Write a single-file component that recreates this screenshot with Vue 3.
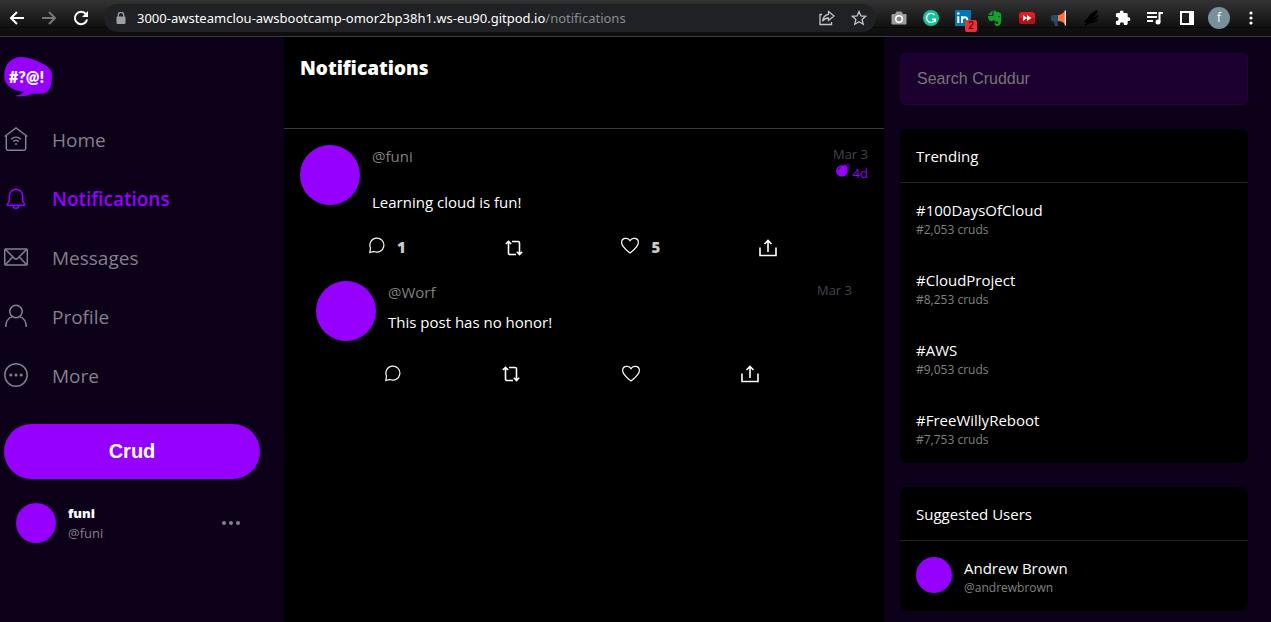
<script setup>
import { ref } from 'vue'

const search = ref('')

const navItems = [
  { name: 'Home', icon: 'home' },
  { name: 'Notifications', icon: 'bell', active: true },
  { name: 'Messages', icon: 'mail' },
  { name: 'Profile', icon: 'user' },
  { name: 'More', icon: 'more' },
]

const activities = [
  { handle: '@funi', date: 'Mar 3', expires: '4d', message: 'Learning cloud is fun!', replies: 1, likes: 5 },
  { handle: '@Worf', date: 'Mar 3', message: 'This post has no honor!', reply: true },
]

const trends = [
  { tag: '#100DaysOfCloud', count: '#2,053 cruds' },
  { tag: '#CloudProject', count: '#8,253 cruds' },
  { tag: '#AWS', count: '#9,053 cruds' },
  { tag: '#FreeWillyReboot', count: '#7,753 cruds' },
]
</script>

<template>
  <div class="window">
    <header class="toolbar">
      <div class="history">
        <button type="button" aria-label="Back">
          <svg width="16" height="16" viewBox="0 0 16 16" class="line"><path d="M15 8H2M8 2 2 8l6 6" /></svg>
        </button>
        <button type="button" aria-label="Forward" class="dim">
          <svg width="16" height="16" viewBox="0 0 16 16" class="line"><path d="M1 8h13M8 2l6 6-6 6" /></svg>
        </button>
        <button type="button" aria-label="Reload">
          <svg width="16" height="16" viewBox="0 0 16 16" class="line"><path d="M13 4.2A6.2 6.2 0 1 0 14.1 9.5" /><path d="M15 1v6H9z" fill="currentColor" stroke="none" /></svg>
        </button>
      </div>

      <div class="address">
        <svg class="lock" width="10" height="12" viewBox="0 0 10 12"><path d="M2.3 5V3a2.7 2.7 0 0 1 5.4 0v2" fill="none" stroke="#9aa0a6" stroke-width="1.3" /><rect x="0.5" y="4.5" width="9" height="7.5" rx="1" fill="#9aa0a6" /></svg>
        <p class="url">3000-awsteamclou-awsbootcamp-omor2bp38h1.ws-eu90.gitpod.io<span>/notifications</span></p>
        <button type="button" aria-label="Share page">
          <svg width="16" height="16" viewBox="0 0 16 16" class="thin"><path d="M3 4.5H1v10h11.500V12M9.500 1.500l5.500 4.500-5.500 4.500V8C6.500 8 5 9 3.500 11.200 4 7.500 6 4.800 9.500 4.300z" /></svg>
        </button>
        <button type="button" aria-label="Bookmark">
          <svg width="16" height="16" viewBox="0 0 16 16" class="thin"><path d="m8 1.5 1.9 4.400 4.800.4-3.600 3.200 1.100 4.700L8 11.700l-4.200 2.500 1.100-4.700L1.300 6.300l4.800-.4z" /></svg>
        </button>
      </div>

      <div class="extensions">
        <button type="button" aria-label="Screenshot">
          <svg width="16" height="16" viewBox="0 0 16 16"><path d="M1.500 4H4l1.500-2.500h5L12 4h2.500A1 1 0 0 1 15.500 5v8.500a1 1 0 0 1-1 1h-13a1 1 0 0 1-1-1V5a1 1 0 0 1 1-1z" fill="#9b9b9b" /><circle cx="8" cy="9" r="4" fill="#fff" /><circle cx="8" cy="9" r="2.5" fill="#888" /></svg>
        </button>
        <button type="button" aria-label="Grammarly">
          <svg width="16" height="16" viewBox="0 0 16 16"><circle cx="8" cy="8" r="8" fill="#15c39a" /><path d="M11.500 5A4.500 4.500 0 1 0 12.300 9.300H9M12.300 9.300v2.700" fill="none" stroke="#fff" stroke-width="1.4" /></svg>
        </button>
        <button type="button" aria-label="LinkedIn" class="badged">
          <svg width="16" height="16" viewBox="0 0 16 16"><rect width="16" height="16" fill="#0077b5" /><path d="M3.300 6.200V13M7 13V6.200M7.200 9.500c0-3 5-3.300 5 0V13" fill="none" stroke="#fff" stroke-width="2" /><circle cx="3.3" cy="3.5" r="1.3" fill="#fff" /></svg>
          <span class="badge">2</span>
        </button>
        <button type="button" aria-label="Evernote">
          <svg width="16" height="16" viewBox="0 0 16 16"><path d="M5.500.6 1 5h3.500a1 1 0 0 0 1-1zM6.500.5V5a1 1 0 0 1-1 1H1c0 3 1 5 3 5 1.500 0 2.500-.5 3-1.500.2 1.500 1 2 2.500 2 1.300 0 1.700.5 1.700 1.300 0 1-.7 1.200-1.500 1.200s-1-.8-.3-1.300C7.500 12 6.500 15.500 9.500 15.900c3 .3 4.300-1.200 4.700-5 .3-3 .3-6-.5-8-1-1-3-1-4-1C9 .8 8 .3 6.500.5z" fill="#12a32f" /><path d="M11 7c.2-1.200 1.500-1.200 1.700.2z" fill="#111" /></svg>
        </button>
        <button type="button" aria-label="Video downloader">
          <svg width="16" height="16" viewBox="0 0 16 16"><rect y="2" width="16" height="12" rx="3" fill="#e01b22" /><path d="M0 8h16v3a3 3 0 0 1-3 3H3a3 3 0 0 1-3-3z" fill="#b90e15" /><path d="m4 5 4 3-4 3zm4 0 4.500 3L8 11z" fill="#fff" /></svg>
        </button>
        <button type="button" aria-label="Announcements">
          <svg width="16" height="16" viewBox="0 0 16 16"><path d="M2 5h6v6.500H2A2 2 0 0 1 0 9.500V7a2 2 0 0 1 2-2zM3 11h3l1 5H4z" fill="#2d4a68" /><path d="M7 5c3 0 5-2 7-4v13c-2-2-4-3-7-3z" fill="#ff7043" /><path d="M13.700.5H15v15h-1.300z" fill="#e8e8e8" /></svg>
        </button>
        <button type="button" aria-label="Signature">
          <svg width="16" height="16" viewBox="0 0 16 16"><path d="M1 11c1.500-1 2-.5 3-2 2-4 5-7 9-8.500 2-.5 2.500.5 1.500 2L9 9l5.500-4c1.500 0 1.500 1.500.5 2l-5 4 4-1.500c1.500 0 1.500 1 .5 1.500-3 2-6 2.500-9 2.500L2.500 16l-1-1 2-2.500c-1 0-2.500 0-2.500-1.500z" fill="#000" /></svg>
        </button>
        <button type="button" aria-label="Extensions">
          <svg width="16" height="16" viewBox="0 0 16 16"><path d="M13.500 7.300h-.8V4.500a1.400 1.400 0 0 0-1.400-1.400H8.600v-.8a1.900 1.900 0 0 0-3.800 0v.8H2.200A1.400 1.400 0 0 0 .9 4.500v2.600h.7a2 2 0 0 1 0 4H.9v2.500A1.400 1.400 0 0 0 2.200 15h2.700v-.8a2 2 0 0 1 4 0v.8h2.400a1.400 1.400 0 0 0 1.400-1.400v-2.500h.8a1.900 1.900 0 0 0 0-3.800z" fill="#fff" /></svg>
        </button>
        <button type="button" aria-label="Media controls">
          <svg width="16" height="16" viewBox="0 0 16 16" class="line"><path d="M0 3h10M0 7h10M0 11h6M12.500 12V3H16" /><circle cx="11" cy="12" r="2.5" fill="#fff" stroke="none" /></svg>
        </button>
        <button type="button" aria-label="Side panel">
          <svg width="16" height="16" viewBox="0 0 16 16"><path d="M1 1h14v14H1zm2 2v10h7V3z" fill="#fff" fill-rule="evenodd" /></svg>
        </button>
        <button type="button" class="account" aria-label="Account">f</button>
        <button type="button" aria-label="Menu">
          <svg width="16" height="16" viewBox="0 0 16 16" fill="#fff"><circle cx="8" cy="3" r="1.6" /><circle cx="8" cy="8" r="1.6" /><circle cx="8" cy="13" r="1.6" /></svg>
        </button>
      </div>
    </header>

    <div class="page">
      <nav class="sidebar">
        <svg class="logo" width="48" height="40" viewBox="0 0 48 40" role="img" aria-label="Cruddur">
          <path d="M17 0c7 0 15 3 22 7 6 3 9 6 9 12-.2 6-1 12-4 15-3 3-8 3-15 2.500-4 2-11 3.700-18 2.500 4-.7 7-2 9-4C12 34 4 31 1 24-1 17 1 9 5 5c3-3 7-5 12-5z" fill="#9500ff" />
          <text x="5" y="26" class="logo-text">#?@!</text>
        </svg>

        <a v-for="item in navItems" :key="item.name" href="#" class="nav-item" :class="{ active: item.active }">
          <svg width="24" height="24" viewBox="0 0 24 24" class="nav-icon">
            <template v-if="item.icon === 'home'">
              <path d="M.7 9.500 12 1l11.300 8.500M2.300 8.500v13a1.700 1.700 0 0 0 1.700 1.700h16a1.700 1.700 0 0 0 1.700-1.700v-13" />
              <path d="M7.200 12.300c2.800-2.600 6.800-2.600 9.600 0M9.300 14.600c1.600-1.500 3.800-1.500 5.400 0" />
              <circle cx="12" cy="17" r="1" class="solid" />
            </template>
            <template v-else-if="item.icon === 'bell'">
              <path d="M3.400 19.300v-1.200l1.900-3V10a6.700 6.700 0 0 1 13.400 0v5.100l1.900 3v1.200zM9.200 19.500c0 3.800 5.600 3.800 5.600 0" />
            </template>
            <template v-else-if="item.icon === 'mail'">
              <rect x=".7" y="4" width="22.600" height="16" rx="1" />
              <path d="m1.500 4.500 8.200 8.200c1.500 1.700 3.100 1.700 4.600 0l8.200-8.200M1.500 19.500 8.700 12M22.500 19.500 15.300 12" />
            </template>
            <template v-else-if="item.icon === 'user'">
              <circle cx="12" cy="7.5" r="6.2" />
              <path d="M1.700 23c0-5.300 2.600-9 6.800-10.600M22.300 23c0-5.300-2.600-9-6.800-10.600" />
            </template>
            <template v-else>
              <circle cx="12" cy="12" r="11.2" />
              <g class="solid"><circle cx="6.8" cy="12" r="1.5" /><circle cx="12" cy="12" r="1.5" /><circle cx="17.2" cy="12" r="1.5" /></g>
            </template>
          </svg>
          <span>{{ item.name }}</span>
        </a>

        <button type="button" class="crud">Crud</button>

        <div class="profile">
          <div class="avatar small"></div>
          <div class="who">
            <strong>funi</strong>
            <span>@funi</span>
          </div>
          <button type="button" aria-label="Account options" class="options">
            <svg width="20" height="6" viewBox="0 0 20 6" fill="currentColor"><circle cx="3" cy="3" r="2" /><circle cx="10" cy="3" r="2" /><circle cx="17" cy="3" r="2" /></svg>
          </button>
        </div>
      </nav>

      <main class="feed">
        <header class="feed-head"><h1>Notifications</h1></header>

        <article v-for="a in activities" :key="a.handle" class="activity" :class="{ reply: a.reply }">
          <div class="avatar large"></div>
          <div class="body">
            <div class="meta">
              <a href="#" class="handle">{{ a.handle }}</a>
              <div class="times">
                <span class="date">{{ a.date }}</span>
                <span v-if="a.expires" class="expires">
                  <svg width="14" height="14" viewBox="0 0 14 14" fill="currentColor"><circle cx="5.8" cy="7" r="5.8" /><path d="m7.500 1.200 1.200-1L12 3.500l-1 1.300z" /><path d="M10.500 2c.8-1.700 1.800-1.500 3-1M12 3h1.800" fill="none" stroke="currentColor" /><path d="M2.200 6c.3-1.400 1-2.200 2.200-2.600" fill="none" stroke="#000" stroke-width=".8" /></svg>
                  {{ a.expires }}
                </span>
              </div>
            </div>
            <p class="message">{{ a.message }}</p>
            <div class="actions">
              <button type="button" aria-label="Reply">
                <svg width="16" height="18" viewBox="0 0 16 18" class="outline"><path d="M.8 15.500 1.500 11A7 7 0 1 1 5 14.500z" /></svg>
                <span v-if="a.replies" class="count">{{ a.replies }}</span>
              </button>
              <button type="button" aria-label="Repost">
                <svg width="18" height="18" viewBox="0 0 18 18" class="outline heavy"><path d="M.8 5 3.500 2.300 6.200 5M3.500 2.500V14a1.500 1.500 0 0 0 1.500 1.500h6M17.200 12.800l-2.700 2.700-2.700-2.700M14.500 15.300V4A1.500 1.500 0 0 0 13 2.500H7" /></svg>
              </button>
              <button type="button" aria-label="Like">
                <svg width="18" height="18" viewBox="0 0 18 18" class="outline"><path d="M9 16C6 13.500.6 9.800.6 5.500.6 1 6.800-.2 9 3.600c2.200-3.800 8.400-2.600 8.400 1.900C17.400 9.800 12 13.500 9 16z" /></svg>
                <span v-if="a.likes" class="count">{{ a.likes }}</span>
              </button>
              <button type="button" aria-label="Share">
                <svg width="18" height="18" viewBox="0 0 18 18" class="outline heavy"><path d="M1 8.500v8h16v-8M9 13V1.800M5.500 5 9 1.500 12.500 5" /></svg>
              </button>
            </div>
          </div>
        </article>
      </main>

      <aside class="rail">
        <input v-model="search" type="search" class="search" placeholder="Search Cruddur" aria-label="Search Cruddur" />

        <section class="card">
          <h2>Trending</h2>
          <a v-for="t in trends" :key="t.tag" href="#" class="entry">
            <span class="lines"><span class="primary">{{ t.tag }}</span><span class="secondary">{{ t.count }}</span></span>
          </a>
        </section>

        <section class="card">
          <h2>Suggested Users</h2>
          <a href="#" class="entry">
            <span class="avatar tiny"></span>
            <span class="lines"><span class="primary">Andrew Brown</span><span class="secondary">@andrewbrown</span></span>
          </a>
        </section>
      </aside>
    </div>
  </div>
</template>

<style>
body {
  margin: 0;
  background: #000;
}
</style>

<style scoped>
.window {
  display: flex;
  flex-direction: column;
  min-height: 100vh;
  color: #fff;
  font-family: 'Open Sans', 'Noto Sans', sans-serif;
  font-size: 15px;
}
.window * {
  box-sizing: border-box;
}
button {
  display: flex;
  align-items: center;
  justify-content: center;
  padding: 0;
  border: 0;
  background: none;
  color: inherit;
  font-family: inherit;
}
a {
  color: inherit;
  text-decoration: none;
}
svg {
  display: block;
  flex: none;
}
h1, h2, p {
  margin: 0;
}

.toolbar {
  display: flex;
  align-items: center;
  gap: 15px;
  height: 37px;
  padding: 0 12px 1px 9px;
  background: linear-gradient(#333 0, #111 27px, #000 27px, #111 28px, #0d0d0d 36px);
  border-bottom: 1px solid #3c3c3c;
}
.history,
.extensions {
  display: flex;
  align-items: center;
  gap: 16px;
}
.dim {
  color: #777;
}
.line {
  fill: none;
  stroke: currentColor;
  stroke-width: 2;
}
.thin {
  fill: none;
  stroke: #c4c7ca;
  stroke-width: 1.3;
}
.address {
  display: flex;
  flex: 1;
  align-items: center;
  gap: 16px;
  height: 28px;
  padding: 0 9px 0 12px;
  border-radius: 14px;
  background: #202124;
}
.lock {
  margin-right: -5px;
}
.url {
  flex: 1;
  font-family: 'Noto Sans', 'Open Sans', sans-serif;
  font-size: 13px;
  white-space: nowrap;
}
.url span {
  color: #8a8d91;
}
.badged {
  position: relative;
}
.badge {
  position: absolute;
  top: 10px;
  left: 10px;
  width: 12px;
  height: 12px;
  border-radius: 2px;
  background: #f52b35;
  color: #000;
  font: 10px/12px 'Liberation Sans', sans-serif;
}
.account {
  width: 22px;
  height: 22px;
  margin: 0 -3px;
  border-radius: 50%;
  background: #78909c;
  font-size: 12px;
}

.page {
  display: grid;
  flex: 1;
  grid-template-columns: 284px minmax(0, 600px) minmax(0, 1fr);
}
.sidebar {
  padding: 20px 24px 20px 4px;
  background: #0d0019;
}
.logo {
  margin-bottom: 13px;
}
.logo-text {
  fill: #fff;
  font: 800 16px Lato, sans-serif;
}
.nav-item {
  display: flex;
  align-items: center;
  gap: 24px;
  height: 59px;
  color: #867f8c;
  font-size: 19px;
}
.nav-item.active {
  color: #9500ff;
  font-weight: 600;
}
.nav-icon {
  margin-bottom: 2px;
  fill: none;
  stroke: currentColor;
  stroke-width: 1.5;
}
.solid {
  fill: currentColor;
  stroke: none;
}
.crud {
  width: 100%;
  height: 55px;
  margin-top: 19px;
  border-radius: 28px;
  background: #9500ff;
  font: bold 20px 'Liberation Sans', Arial, sans-serif;
}
.profile {
  display: flex;
  align-items: center;
  gap: 12px;
  padding: 24px 19px 0 12px;
}
.avatar {
  flex: none;
  border-radius: 50%;
  background: #9500ff;
}
.tiny {
  width: 36px;
  height: 36px;
}
.small {
  width: 40px;
  height: 40px;
}
.large {
  width: 60px;
  height: 60px;
}
.who {
  display: flex;
  flex: 1;
  flex-direction: column;
  line-height: 20px;
  font-size: 13px;
}
.who strong {
  font-weight: 800;
}
.who span {
  color: #867f8c;
}
.options {
  color: #867f8c;
}

.feed {
  background: #000;
}
.feed-head {
  height: 92px;
  padding: 16px;
  border-bottom: 1px solid #3a3c4a;
}
.feed-head h1 {
  font-size: 19px;
  font-weight: 800;
  line-height: 30px;
}
.activity {
  display: flex;
  gap: 12px;
  padding: 16px 16px 8px;
}
.activity.reply {
  padding: 16px 32px;
}
.body {
  flex: 1;
}
.meta {
  display: flex;
  justify-content: space-between;
  line-height: 22px;
}
.handle {
  color: #808080;
}
.times {
  display: flex;
  flex-direction: column;
  align-items: flex-end;
  font-size: 13px;
  line-height: 19px;
}
.date {
  color: #444650;
}
.expires {
  display: flex;
  gap: 3px;
  color: #9500ff;
}
.message {
  margin-top: 8px;
  line-height: 22px;
}
.actions {
  display: flex;
  align-items: flex-end;
  justify-content: space-between;
  margin: 24px 91px 0 -3px;
}
.reply .actions {
  margin: 32px 93px 0 -3px;
}
.actions button {
  align-items: flex-start;
  gap: 12px;
}
.outline {
  fill: none;
  stroke: #fff;
  stroke-width: 1.2;
}
.heavy {
  stroke-width: 1.6;
}
.count {
  color: #ccc;
  font-size: 15px;
  font-weight: 800;
  line-height: 20px;
}

.rail {
  display: flex;
  flex-direction: column;
  gap: 24px;
  padding: 16px 23px 11px 16px;
  background: #0d0019;
}
.search {
  width: 100%;
  height: 52px;
  padding: 0 16px;
  border: 1px solid #24003d;
  border-radius: 6px;
  outline: 0;
  background: #1c0030;
  color: #fff;
  font: 16px 'Liberation Sans', Arial, sans-serif;
}
.search::placeholder {
  color: #757575;
}
.card {
  border-radius: 8px;
  background: #000;
}
.card h2 {
  padding: 17px 16px 15px;
  border-bottom: 1px solid #20222e;
  font-size: 15px;
  font-weight: 400;
  line-height: 21px;
}
.entry {
  display: flex;
  align-items: flex-start;
  gap: 12px;
  padding: 16px 16px 15px;
}
.lines {
  display: flex;
  flex-direction: column;
  padding-top: 1px;
}
.primary {
  line-height: 21px;
}
.secondary {
  color: #808080;
  font-size: 12px;
  line-height: 17px;
}
</style>
